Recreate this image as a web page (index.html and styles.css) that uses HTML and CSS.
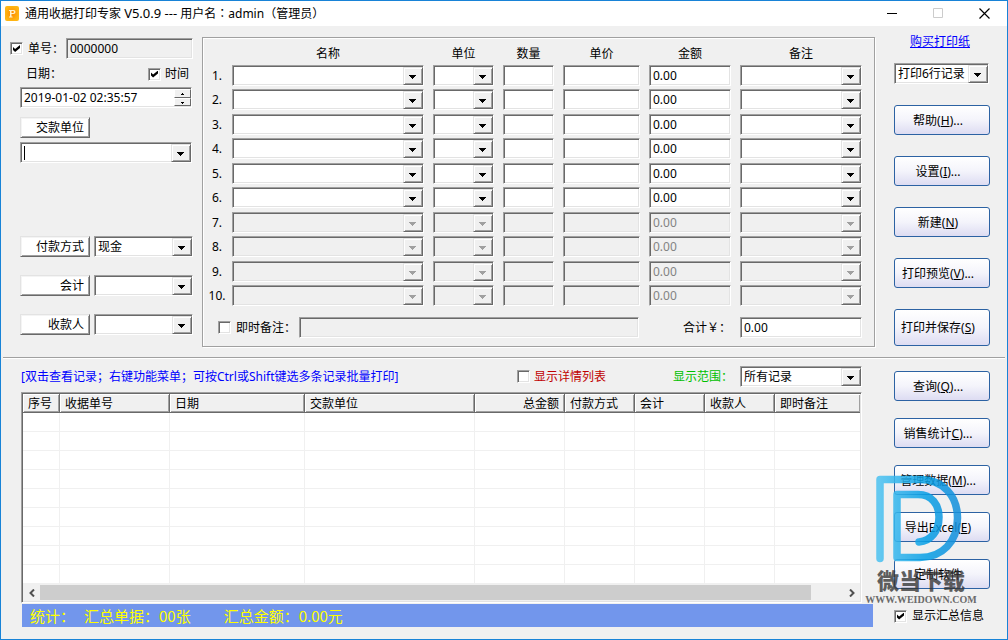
FILE: index.html
```html
<!DOCTYPE html>
<html lang="zh-CN">
<head>
<meta charset="utf-8">
<title>通用收据打印专家</title>
<link rel="stylesheet" href="styles.css">
</head>
<body>
<div class="window">
  <header class="titlebar">
    <svg class="app-icon" viewBox="0 0 14 15" aria-hidden="true">
      <defs>
        <radialGradient id="iconfill"><stop offset="0" stop-color="#ff8a00"/><stop offset="1" stop-color="#ffb613"/></radialGradient>
      </defs>
      <rect width="14" height="15" rx="2" fill="url(#iconfill)"/>
      <path d="M4 4H8.5Q10.5 4 10.5 6T8.5 8H6.5V10.500H7.500V11.500H4V10.500H5V5H4ZM6.500 5V7H8Q9 7 9 6T8 5Z" fill="#fff3d0" fill-rule="evenodd"/>
    </svg>
    <h1 class="title">通用收据打印专家 <span class="version">V5.0.9 ---</span> 用户名<span lang="zh-TW">：</span>admin<span lang="zh-TW">（</span>管理员<span lang="zh-TW">）</span></h1>
    <div class="caption">
      <button class="caption-btn" aria-label="最小化"><svg viewBox="0 0 11 11"><path d="M0 5.500H10" stroke="#000"/></svg></button>
      <button class="caption-btn" aria-label="最大化" disabled><svg viewBox="0 0 11 11"><path d="M.5 .5H9.500V9.500H.5Z" stroke="#ccc" fill="none"/></svg></button>
      <button class="caption-btn" aria-label="关闭"><svg viewBox="0 0 11 11"><path d="M.5 .5L10.500 10.500M10.500 .5L.5 10.500" stroke="#000" stroke-width="1.200"/></svg></button>
    </div>
  </header>

  <section class="entry">
    <form class="details">
      <div class="line">
        <input class="check" type="checkbox" id="use-no" checked>
        <label class="no-label" for="use-no">单号：</label>
        <input class="field grey grow" type="text" value="0000000" aria-label="单号" readonly>
      </div>
      <div class="line date-head">
        <label for="date">日期：</label>
        <span class="line tick"><input class="check" type="checkbox" id="use-time" checked><label for="use-time">时间</label></span>
      </div>
      <div class="sunken date indent">
        <input class="bare" type="text" id="date" value="2019-01-02 02:35:57">
        <span class="spin">
          <button class="spin-btn up" type="button" aria-label="增加"></button>
          <button class="spin-btn down" type="button" aria-label="减少"></button>
        </span>
      </div>
      <button class="label-btn payer indent" type="button">交款单位</button>
      <span class="combo payer-combo indent"><input class="bare caret" type="text" aria-label="交款单位"></span>
      <div class="pairs indent">
        <div class="line pair"><button class="label-btn" type="button">付款方式</button><span class="combo grow"><select aria-label="付款方式"><option>现金</option></select></span></div>
        <div class="line pair"><button class="label-btn" type="button">会计</button><span class="combo grow"><select aria-label="会计"><option></option></select></span></div>
        <div class="line pair"><button class="label-btn" type="button">收款人</button><span class="combo grow"><select aria-label="收款人"><option></option></select></span></div>
      </div>
    </form>

    <form class="group">
      <table class="items">
        <colgroup><col class="c-num"><col><col class="c-unit"><col class="c-qty"><col class="c-price"><col class="c-amount"><col class="c-note"></colgroup>
        <thead>
          <tr><th></th><th>名称</th><th>单位</th><th>数量</th><th>单价</th><th>金额</th><th>备注</th></tr>
        </thead>
        <tbody>
          <tr><td>1.</td><td><span class="combo"><select aria-label="名称 1"></select></span></td><td><span class="combo"><select aria-label="单位 1"></select></span></td><td><input class="field" type="text" aria-label="数量 1"></td><td><input class="field" type="text" aria-label="单价 1"></td><td><input class="field" type="text" value="0.00" aria-label="金额 1"></td><td><span class="combo"><select aria-label="备注 1"></select></span></td></tr>
          <tr><td>2.</td><td><span class="combo"><select aria-label="名称 2"></select></span></td><td><span class="combo"><select aria-label="单位 2"></select></span></td><td><input class="field" type="text" aria-label="数量 2"></td><td><input class="field" type="text" aria-label="单价 2"></td><td><input class="field" type="text" value="0.00" aria-label="金额 2"></td><td><span class="combo"><select aria-label="备注 2"></select></span></td></tr>
          <tr><td>3.</td><td><span class="combo"><select aria-label="名称 3"></select></span></td><td><span class="combo"><select aria-label="单位 3"></select></span></td><td><input class="field" type="text" aria-label="数量 3"></td><td><input class="field" type="text" aria-label="单价 3"></td><td><input class="field" type="text" value="0.00" aria-label="金额 3"></td><td><span class="combo"><select aria-label="备注 3"></select></span></td></tr>
          <tr><td>4.</td><td><span class="combo"><select aria-label="名称 4"></select></span></td><td><span class="combo"><select aria-label="单位 4"></select></span></td><td><input class="field" type="text" aria-label="数量 4"></td><td><input class="field" type="text" aria-label="单价 4"></td><td><input class="field" type="text" value="0.00" aria-label="金额 4"></td><td><span class="combo"><select aria-label="备注 4"></select></span></td></tr>
          <tr><td>5.</td><td><span class="combo"><select aria-label="名称 5"></select></span></td><td><span class="combo"><select aria-label="单位 5"></select></span></td><td><input class="field" type="text" aria-label="数量 5"></td><td><input class="field" type="text" aria-label="单价 5"></td><td><input class="field" type="text" value="0.00" aria-label="金额 5"></td><td><span class="combo"><select aria-label="备注 5"></select></span></td></tr>
          <tr><td>6.</td><td><span class="combo"><select aria-label="名称 6"></select></span></td><td><span class="combo"><select aria-label="单位 6"></select></span></td><td><input class="field" type="text" aria-label="数量 6"></td><td><input class="field" type="text" aria-label="单价 6"></td><td><input class="field" type="text" value="0.00" aria-label="金额 6"></td><td><span class="combo"><select aria-label="备注 6"></select></span></td></tr>
          <tr><td>7.</td><td><span class="combo off"><select aria-label="名称 7" disabled></select></span></td><td><span class="combo off"><select aria-label="单位 7" disabled></select></span></td><td><input class="field" type="text" aria-label="数量 7" disabled></td><td><input class="field" type="text" aria-label="单价 7" disabled></td><td><input class="field" type="text" value="0.00" aria-label="金额 7" disabled></td><td><span class="combo off"><select aria-label="备注 7" disabled></select></span></td></tr>
          <tr><td>8.</td><td><span class="combo off"><select aria-label="名称 8" disabled></select></span></td><td><span class="combo off"><select aria-label="单位 8" disabled></select></span></td><td><input class="field" type="text" aria-label="数量 8" disabled></td><td><input class="field" type="text" aria-label="单价 8" disabled></td><td><input class="field" type="text" value="0.00" aria-label="金额 8" disabled></td><td><span class="combo off"><select aria-label="备注 8" disabled></select></span></td></tr>
          <tr><td>9.</td><td><span class="combo off"><select aria-label="名称 9" disabled></select></span></td><td><span class="combo off"><select aria-label="单位 9" disabled></select></span></td><td><input class="field" type="text" aria-label="数量 9" disabled></td><td><input class="field" type="text" aria-label="单价 9" disabled></td><td><input class="field" type="text" value="0.00" aria-label="金额 9" disabled></td><td><span class="combo off"><select aria-label="备注 9" disabled></select></span></td></tr>
          <tr><td>10.</td><td><span class="combo off"><select aria-label="名称 10" disabled></select></span></td><td><span class="combo off"><select aria-label="单位 10" disabled></select></span></td><td><input class="field" type="text" aria-label="数量 10" disabled></td><td><input class="field" type="text" aria-label="单价 10" disabled></td><td><input class="field" type="text" value="0.00" aria-label="金额 10" disabled></td><td><span class="combo off"><select aria-label="备注 10" disabled></select></span></td></tr>
        </tbody>
      </table>
      <div class="line totals">
        <input class="check" type="checkbox" id="use-memo">
        <label class="memo-label" for="use-memo">即时备注：</label>
        <input class="field grey grow" type="text" aria-label="即时备注" readonly>
        <label class="sum-label" for="sum">合计￥：</label>
        <input class="field sum" type="text" id="sum" value="0.00">
      </div>
    </form>

    <aside class="actions">
      <a class="buy" href="#">购买打印纸</a>
      <span class="combo rows-combo"><select aria-label="打印行数"><option>打印6行记录</option></select></span>
      <button class="action">帮助(<u>H</u>)...</button>
      <button class="action">设置(<u>I</u>)...</button>
      <button class="action">新建(<u>N</u>)</button>
      <button class="action">打印预览(<u>V</u>)...</button>
      <button class="action tall">打印并保存(<u>S</u>)</button>
    </aside>
  </section>

  <hr class="divider">

  <section class="records">
    <div class="listing">
      <div class="line tools">
        <p class="hint">[双击查看记录；右键功能菜单；可按Ctrl或Shift键选多条记录批量打印]</p>
        <span class="line detail"><input class="check" type="checkbox" id="detail"><label for="detail">显示详情列表</label></span>
        <label class="range-label" for="range">显示范围：</label>
        <span class="combo range"><select id="range"><option>所有记录</option></select></span>
      </div>
      <div class="sunken list">
        <table class="log">
          <colgroup><col class="l-seq"><col class="l-no"><col class="l-date"><col class="l-payer"><col class="l-total"><col class="l-kind"><col class="l-kind"><col class="l-kind"><col></colgroup>
          <thead>
            <tr><th>序号</th><th>收据单号</th><th>日期</th><th>交款单位</th><th class="right">总金额</th><th>付款方式</th><th>会计</th><th>收款人</th><th>即时备注</th></tr>
          </thead>
          <tbody>
            <tr><td></td><td></td><td></td><td></td><td></td><td></td><td></td><td></td><td></td></tr>
            <tr><td></td><td></td><td></td><td></td><td></td><td></td><td></td><td></td><td></td></tr>
            <tr><td></td><td></td><td></td><td></td><td></td><td></td><td></td><td></td><td></td></tr>
            <tr><td></td><td></td><td></td><td></td><td></td><td></td><td></td><td></td><td></td></tr>
            <tr><td></td><td></td><td></td><td></td><td></td><td></td><td></td><td></td><td></td></tr>
            <tr><td></td><td></td><td></td><td></td><td></td><td></td><td></td><td></td><td></td></tr>
            <tr><td></td><td></td><td></td><td></td><td></td><td></td><td></td><td></td><td></td></tr>
            <tr><td></td><td></td><td></td><td></td><td></td><td></td><td></td><td></td><td></td></tr>
            <tr><td></td><td></td><td></td><td></td><td></td><td></td><td></td><td></td><td></td></tr>
          </tbody>
        </table>
        <div class="scroll">
          <button class="scroll-btn" aria-label="向左滚动"><svg viewBox="0 0 8 8"><path d="M6 .5L2.500 4L6 7.500" /></svg></button>
          <div class="track"><div class="thumb"></div></div>
          <button class="scroll-btn" aria-label="向右滚动"><svg viewBox="0 0 8 8"><path d="M2 .5L5.500 4L2 7.500" /></svg></button>
        </div>
      </div>
      <footer class="status"><span class="stat-head">统计：</span><span class="stat-count">汇总单据：00张</span><span>汇总金额：0.00元</span></footer>
    </div>

    <aside class="actions lower">
      <button class="action">查询(<u>Q</u>)...</button>
      <button class="action">销售统计<u>C</u>)...</button>
      <button class="action">管理数据(<u>M</u>)...</button>
      <button class="action">导出Excel(<u>E</u>)</button>
      <button class="action">定制软件</button>
      <span class="line summary"><input class="check" type="checkbox" id="summary" checked><label for="summary">显示汇总信息</label></span>
    </aside>
  </section>

  <div class="brand">
    <svg class="brand-logo" viewBox="0 0 90 90" aria-hidden="true">
      <defs>
        <linearGradient id="brandfill" x1="0" y1="0" x2="1" y2="0"><stop offset="0" stop-color="#4cc2f1"/><stop offset=".6" stop-color="#07a0e6"/><stop offset="1" stop-color="#1590dc"/></linearGradient>
      </defs>
      <path d="M5 84.500V5.500H45C68 5.500 82.500 22 82.500 44C82.500 68 67 83.500 45 83.500H22V20.500H43C57 20.500 64 31 64 43C64 57 56 67 44 68" fill="none" stroke="url(#brandfill)" stroke-width="7.500" stroke-linecap="round" stroke-linejoin="round"/>
    </svg>
    <div class="brand-name">微当下载</div>
    <div class="brand-site">WWW.WEIDOWN.COM</div>
  </div>
</div>
</body>
</html>
```

FILE: styles.css
```css
* { box-sizing: border-box; }

body {
  margin: 0;
  font: 12px/16px "Noto Sans", "Noto Sans CJK SC", sans-serif;
  color: #000;
}

input, select, button { font: inherit; color: inherit; margin: 0; }

.window {
  position: relative;
  min-height: 100vh;
  min-width: 900px;
  border: 1px solid #1883d7;
  background: #f0f0f0;
}

/* title bar */
.titlebar {
  display: flex;
  align-items: center;
  height: 25px;
  padding-left: 4px;
  background: #fff;
}
.app-icon { width: 14px; height: 15px; }
.title {
  flex: 1;
  margin: 0 0 0 6px;
  font-size: 12px;
  font-weight: normal;
}
.title [lang] { font-family: "Noto Sans CJK TC", sans-serif; }
.version { font-size: 13px; }
.caption { display: flex; }
.caption-btn {
  display: grid;
  place-items: center;
  width: 46px;
  height: 25px;
  padding: 0;
  border: 0;
  background: none;
}
.caption-btn svg { width: 11px; height: 11px; }

/* shared controls */
.line { display: flex; align-items: center; }
.grow { flex: 1; min-width: 0; }
.indent { margin-left: 10px; }

.field, .combo, .sunken {
  border: 1px solid;
  border-color: #a0a0a0 #fff #fff #a0a0a0;
  background: #fff;
  box-shadow: inset 1px 1px #696969, inset -1px -1px #e3e3e3;
}
.field {
  display: block;
  width: 100%;
  height: 21px;
  padding: 1px 3px;
  border-radius: 0;
  outline: 0;
}
.grey, .field:disabled { background: #f0f0f0; }
.field:disabled { color: #838383; }

.combo { display: flex; height: 21px; padding: 1px 0 0 1px; }
.combo select, .bare {
  appearance: none;
  flex: 1;
  min-width: 0;
  width: 0;
  padding: 0 2px;
  border: 0;
  border-radius: 0;
  outline: 0;
  background: none;
}
.combo .caret { background: linear-gradient(#000, #000) 2px 2px / 1px 14px no-repeat; }
.combo::after {
  content: "";
  width: 18px;
  border: 1px solid;
  border-color: #e3e3e3 #696969 #696969 #e3e3e3;
  box-shadow: inset 1px 1px #fff, inset -1px -1px #a0a0a0;
  background:
    linear-gradient(#000, #000) 5px 7px / 7px 1px no-repeat,
    linear-gradient(#000, #000) 6px 8px / 5px 1px no-repeat,
    linear-gradient(#000, #000) 7px 9px / 3px 1px no-repeat,
    linear-gradient(#000, #000) 8px 10px / 1px 1px no-repeat,
    #f0f0f0;
}
.off { background: #f0f0f0; }
.off::after {
  background:
    linear-gradient(#a0a0a0, #a0a0a0) 5px 7px / 7px 1px no-repeat,
    linear-gradient(#a0a0a0, #a0a0a0) 6px 8px / 5px 1px no-repeat,
    linear-gradient(#a0a0a0, #a0a0a0) 7px 9px / 3px 1px no-repeat,
    linear-gradient(#a0a0a0, #a0a0a0) 8px 10px / 1px 1px no-repeat,
    #f0f0f0;
}

.check {
  appearance: none;
  display: grid;
  place-items: center;
  flex: none;
  width: 13px;
  height: 13px;
  border: 1px solid;
  border-color: #a0a0a0 #fff #fff #a0a0a0;
  background: #fff;
  box-shadow: inset 1px 1px #696969, inset -1px -1px #e3e3e3;
}
.check:checked::before {
  content: "";
  width: 7px;
  height: 7px;
  background: #000;
  clip-path: polygon(0 28%, 30% 58%, 100% 0, 100% 42%, 30% 100%, 0 72%);
}

.label-btn {
  display: block;
  width: 70px;
  height: 21px;
  padding: 1px 5px 0;
  border: 1px solid;
  border-color: #e3e3e3 #696969 #696969 #e3e3e3;
  background: #fff;
  box-shadow: inset 1px 1px #f4f4f4, inset -1px -1px #a0a0a0;
  text-align: right;
}

/* entry area */
.entry { display: flex; padding: 8px 17px 10px 9px; }
.details { width: 183px; margin: 4px 9px 0 0; }
.no-label { width: 38px; margin-left: 5px; white-space: nowrap; }
.date-head { justify-content: space-between; margin: 7px 4px 5px 16px; }
.tick { gap: 4px; }
.date { display: flex; height: 21px; padding: 1px 0 1px 1px; margin-right: 1px; }
.spin { display: flex; flex-direction: column; width: 17px; }
.spin-btn {
  flex: 1;
  padding: 0;
  border: 1px solid;
  border-color: #fff #696969 #696969 #fff;
  background:
    linear-gradient(#000, #000) 7px 3px / 1px 1px no-repeat,
    linear-gradient(#000, #000) 6px 4px / 3px 1px no-repeat,
    #f0f0f0;
}
.spin-btn.down {
  background:
    linear-gradient(#000, #000) 6px 3px / 3px 1px no-repeat,
    linear-gradient(#000, #000) 7px 4px / 1px 1px no-repeat,
    #f0f0f0;
}
.payer { margin-top: 9px; }
.payer-combo { margin-top: 4px; margin-right: 1px; }
.pairs { display: grid; gap: 18px; margin-top: 73px; }
.pair { gap: 4px; }

.group {
  flex: 1;
  margin: 3px 19px 0 0;
  border: 1px solid #a0a0a0;
  box-shadow: inset 1px 1px #fff, 1px 1px #fff;
}
.items {
  width: 100%;
  table-layout: fixed;
  border-collapse: collapse;
}
.items th, .items td { padding: 0 9px 0 0; vertical-align: top; }
.items th { height: 27px; padding-top: 8px; font-weight: normal; }
.items td { height: 25px; }
.items tr:nth-child(odd) td { height: 24px; }
.items td:first-child { padding: 3px 1px 0 0; text-align: center; }
.c-num { width: 29px; }
.c-unit { width: 70px; }
.c-qty { width: 60px; }
.c-price { width: 86px; }
.c-amount { width: 91px; }
.c-note { width: 134px; }
.items td:last-child, .items th:last-child { padding-right: 12px; }
.totals { padding: 7px 12px 8px 15px; }
.memo-label { width: 63px; margin-left: 5px; }
.sum-label { width: 57px; margin: 0 0 0 44px; white-space: nowrap; }
.sum { width: 122px; }

.actions { display: flex; flex-direction: column; width: 96px; }
.buy { align-self: center; margin-right: 4px; color: #00f; }
.rows-combo { margin: 13px 1px 0 0; }
.action {
  height: 30px;
  margin-top: 21px;
  padding: 1px 8px 0 0;
  border: 1px solid #2c62a3;
  border-radius: 3px;
  background: linear-gradient(#fff, #f4f4fb 50%, #dddcf2);
  white-space: nowrap;
}
.tall { height: 37px; }

.divider {
  margin: 0 2px;
  border: 0;
  border-top: 1px solid #a0a0a0;
  border-bottom: 1px solid #fff;
}

/* record list */
.records { display: flex; padding: 7px 17px 11px 20px; }
.listing { flex: 1; min-width: 0; margin-right: 21px; }
.tools { padding-right: 11px; }
.hint { flex: 1; margin: 0; color: #00f; }
.detail { gap: 4px; margin-right: 67px; color: #c00000; }
.range-label { width: 67px; color: #00c000; }
.range { width: 122px; }
.list { margin: 5px 11px 0 0; padding: 1px; }
.log {
  width: 100%;
  table-layout: fixed;
  border-collapse: separate;
  border-spacing: 0;
}
.log th {
  height: 19px;
  padding: 2px 5px 0;
  border-right: 1px solid #696969;
  border-bottom: 1px solid #696969;
  background: #f0f0f0;
  box-shadow: inset 1px 1px #fff, inset -1px -1px #a0a0a0;
  font-weight: normal;
  line-height: 16px;
  text-align: left;
}
.log th:last-child { border-right: 0; }
.log .right { text-align: right; }
.log td {
  height: 19px;
  padding: 0;
  border-right: 1px solid #f0f0f0;
  border-bottom: 1px solid #f0f0f0;
}
.log td:last-child { border-right: 0; }
.l-seq { width: 37px; }
.l-no { width: 110px; }
.l-date { width: 135px; }
.l-payer { width: 170px; }
.l-total { width: 90px; }
.l-kind { width: 70px; }

.scroll { display: flex; height: 17px; background: #f0f0f0; }
.scroll-btn {
  display: grid;
  place-items: center;
  width: 17px;
  padding: 0;
  border: 0;
  background: none;
}
.scroll-btn svg {
  width: 8px;
  height: 8px;
  fill: none;
  stroke: #505050;
  stroke-width: 2;
}
.track { flex: 1; padding: 1px 0; }
.thumb { width: 96%; height: 15px; background: #cdcdcd; }

.status {
  display: flex;
  height: 23px;
  margin: 1px 0 0 1px;
  padding-left: 8px;
  background: #7296ec;
  color: #ff0;
  font: 15px/23px "Noto Sans CJK SC", sans-serif;
  white-space: nowrap;
}
.stat-head { margin-right: 9px; }
.stat-count { margin-right: 33px; }

.lower { gap: 17px; padding-top: 5px; }
.lower .action { margin: 0; }
.summary { gap: 5px; margin-top: 2px; white-space: nowrap; }

/* download site mark */
.brand {
  position: absolute;
  right: 30px;
  bottom: 31px;
  width: 112px;
  pointer-events: none;
  opacity: .86;
}
.brand-logo { display: block; width: 90px; height: 90px; margin-left: 10px; }
.brand-name {
  margin-top: 3px;
  color: #333;
  font: 900 22px/24px "Noto Sans CJK SC", sans-serif;
  text-align: center;
  opacity: .9;
}
.brand-site {
  margin-top: 1px;
  color: #555;
  font: bold 10px/16px "Liberation Serif", serif;
  text-align: center;
}
```
